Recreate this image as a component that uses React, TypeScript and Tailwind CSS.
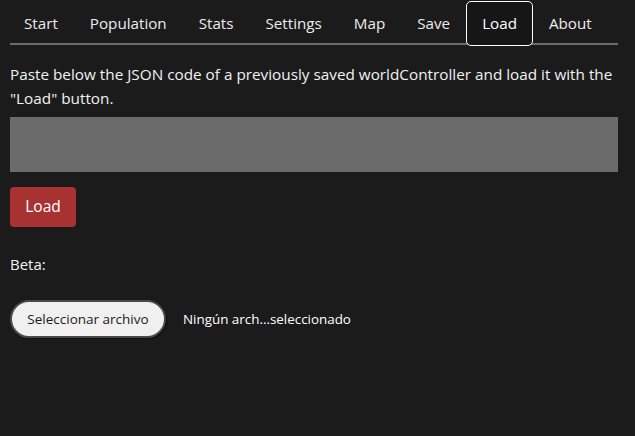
import { useState } from "react";

const TABS = ["Start", "Population", "Stats", "Settings", "Map", "Save", "Load", "About"];

export default function App() {
  const [active, setActive] = useState("Load");
  const [code, setCode] = useState("");

  return (
    <div
      className="min-h-screen bg-[#1b1b1b] pl-[10px] pr-[17px] text-[#f2f2f2]"
      style={{ fontFamily: '"Open Sans", "Noto Sans", sans-serif' }}
    >
      {/* Tabs */}
      <nav className="flex h-[45px] items-start border-b-2 border-[#6b6b6b]">
        {TABS.map((t, i) => (
          <button
            key={t}
            onClick={() => setActive(t)}
            className={
              "mt-px flex h-[45px] items-center rounded-[5px] border px-[15px] text-[15.2px] " +
              (i === 0 ? "-ml-[2px] " : "") +
              (active === t
                ? "border-white bg-[#161616] text-white"
                : "border-transparent text-[#ececec]")
            }
          >
            {t}
          </button>
        ))}
      </nav>

      {/* Load panel */}
      <p className="mt-[17px] text-[15.3px] leading-[24px]">
        Paste below the JSON code of a previously saved worldController and load it with the "Load" button.
      </p>
      <textarea
        value={code}
        onChange={(e) => setCode(e.target.value)}
        className="mt-[7px] block h-[55px] w-full resize-none bg-[#6b6b6b] text-sm text-white outline-none"
      />
      <button className="mt-[15px] block h-[40px] w-[66px] rounded-[4px] bg-[#a83232] text-[15.5px] text-white">
        Load
      </button>

      <p className="mt-[25px] text-[15px] leading-[24px]">Beta:</p>

      <div className="mt-[24px] flex items-center gap-[17px]">
        <button className="h-[38px] w-[156px] rounded-full border-2 border-[#4a4a4a] bg-[#f0f0f0] text-[13.5px] text-[#1b1b1b] shadow-[1px_1px_1px_rgba(0,0,0,0.6)]">
          Seleccionar archivo
        </button>
        <span className="text-[13.4px] text-white">Ningún arch...seleccionado</span>
      </div>
    </div>
  );
}
